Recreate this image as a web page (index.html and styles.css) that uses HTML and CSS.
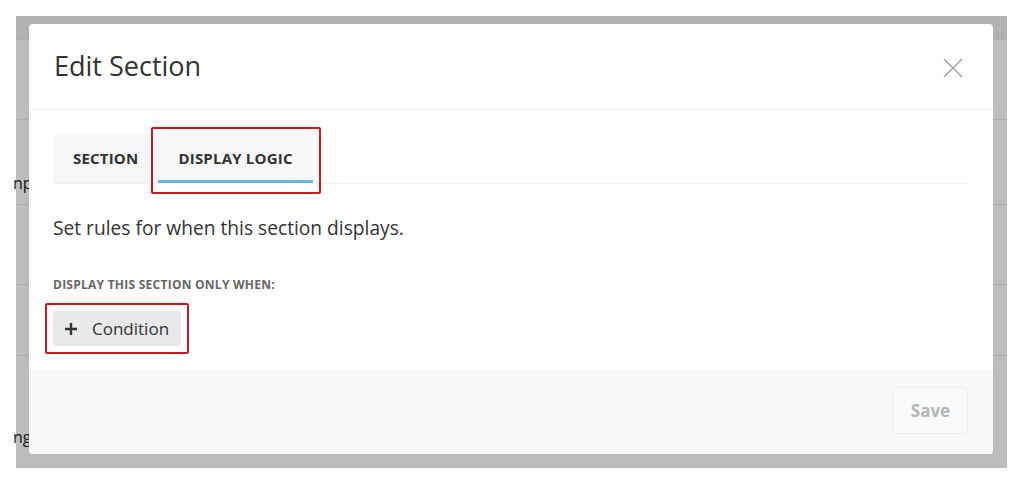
FILE: index.html
```html
<!DOCTYPE html>
<html>
<head>
<meta charset="utf-8">
<link rel="stylesheet" href="styles.css">
</head>
<body>
<div class="stage">
  <div class="page">
    <div class="page-top"></div>
    <div class="page-row"></div>
    <div class="page-row tall"><span class="frag f1">np</span></div>
    <div class="page-row"></div>
    <div class="page-row short"></div>
    <div class="page-row rest"><span class="frag f2">ng</span><span class="frag f3">gy</span></div>
  </div>
  <div class="overlay"></div>
  <div class="modal">
    <div class="modal-header">
      <h2 class="modal-title">Edit Section</h2>
      <button class="close" aria-label="Close">
        <svg width="20" height="20" viewBox="0 0 20 20"><path d="M1 1L19 19M19 1L1 19" stroke="#a0a0a0" stroke-width="1.5" fill="none"/></svg>
      </button>
    </div>
    <div class="modal-body">
      <div class="tabs">
        <div class="tab">SECTION</div>
        <div class="tab active">DISPLAY LOGIC<span class="hl hl-tab"></span></div>
      </div>
      <p class="intro">Set rules for when this section displays.</p>
      <div class="label">DISPLAY THIS SECTION ONLY WHEN:</div>
      <button class="cond"><svg class="plus" width="12" height="12" viewBox="0 0 12 12"><path d="M6 0V12M0 6H12" stroke="#333" stroke-width="2.4" fill="none"/></svg>Condition<span class="hl hl-cond"></span></button>
    </div>
    <div class="modal-footer">
      <button class="save">Save</button>
    </div>
  </div>
</div>
</body>
</html>
```

FILE: styles.css
```css
html, body {
  margin: 0;
  padding: 0;
  background: #fff;
  font-family: "Open Sans", "Liberation Sans", sans-serif;
}
.stage {
  position: relative;
  margin: 16px 0 0 16px;
  width: 991px;
  height: 452px;
}
.page {
  display: flex;
  flex-direction: column;
  height: 100%;
  background: #fff;
}
.page-top {
  height: 23px;
  background: #f0f0f0;
  border-bottom: 1px solid #e8e8e8;
}
.page-row {
  position: relative;
  height: 79px;
  border-bottom: 1px solid #e6e6e6;
}
.page-row.tall { height: 84px; }
.page-row.short { height: 70px; }
.page-row.rest { flex: 1; border-bottom: none; }
.frag {
  position: absolute;
  font-size: 16px;
  color: #222;
}
.f1 { left: -3px; top: 52px; }
.f2 { left: -3px; top: 70px; }
.f3 { left: 124px; top: 72px; }
.overlay {
  position: absolute;
  inset: 0;
  background: rgba(0, 0, 0, 0.26);
}
.modal {
  position: absolute;
  left: 13px;
  top: 8px;
  width: 964px;
  height: 430px;
  background: #fff;
  border-radius: 4px;
  display: flex;
  flex-direction: column;
  overflow: hidden;
}
.modal-header {
  height: 85px;
  border-bottom: 1px solid #f2f2f2;
  display: flex;
  align-items: center;
  justify-content: space-between;
  padding: 0 30px 0 25px;
}
.modal-title {
  margin: 0;
  font-size: 27px;
  font-weight: 400;
  color: #333;
  padding-bottom: 2px;
}
.close {
  border: 0;
  background: none;
  padding: 0;
  width: 20px;
  height: 20px;
  display: flex;
  margin-top: 3px;
}
.modal-body {
  flex: 1;
  padding: 25px 25px 0 24px;
}
.tabs {
  display: flex;
  border-bottom: 1px solid #f0f0f0;
}
.tab {
  position: relative;
  background: #f7f7f7;
  height: 48px;
  line-height: 46px;
  padding: 0 20px;
  font-size: 15px;
  font-weight: 700;
  color: #333;
  letter-spacing: 0.2px;
  box-sizing: border-box;
}
.tab.active {
  border-bottom: 3px solid #6db3e3;
}
.hl {
  position: absolute;
  border: 2.5px solid #cc1a1f;
  border-radius: 2px;
  pointer-events: none;
}
.hl-tab {
  left: -7px;
  right: -8px;
  top: -8px;
  bottom: -14px;
}
.intro {
  margin: 31px 0 0;
  font-size: 19.2px;
  color: #333;
  line-height: 26px;
}
.label {
  margin-top: 36px;
  font-size: 12px;
  line-height: 16px;
  font-weight: 700;
  color: #666;
  letter-spacing: 0.25px;
}
.cond {
  position: relative;
  margin-top: 18px;
  height: 35px;
  padding: 0 12px 0 12px;
  border: 0;
  border-radius: 2px;
  background: #e9e9e9;
  font-family: inherit;
  font-size: 17px;
  color: #333;
  display: flex;
  align-items: center;
}
.plus {
  margin-right: 15px;
}
.hl-cond {
  left: -8px;
  right: -8px;
  top: -8px;
  bottom: -8px;
}
.modal-footer {
  height: 84px;
  background: #f8f9fa;
  display: flex;
  align-items: center;
  justify-content: flex-end;
  padding: 0 25px;
}
.save {
  width: 75px;
  height: 47px;
  background: #f9fafb;
  border: 1px solid #eceef0;
  border-radius: 3px;
  font-family: inherit;
  font-size: 17px;
  font-weight: 700;
  color: #b3b6b8;
  margin-bottom: 4px;
}
```
